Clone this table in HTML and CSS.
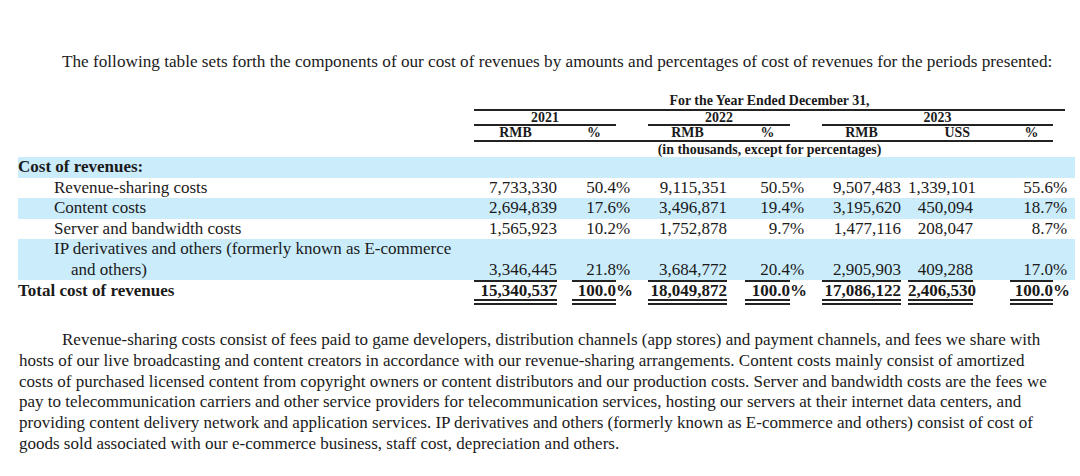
FILE: index.html
```html
<!DOCTYPE html>
<html lang="en">
<head>
<meta charset="utf-8">
<title>Cost of revenues</title>
<link rel="stylesheet" href="styles.css">
</head>
<body>
<div class="page">
  <p class="intro">The following table sets forth the components of our cost of revenues by amounts and percentages of cost of revenues for the periods presented:</p>

  <table class="fin">
    <colgroup>
      <col class="w-label"><col class="w-c1"><col class="w-g15"><col class="w-c2"><col class="w-p"><col class="w-g20">
      <col class="w-c3"><col class="w-g18"><col class="w-c4"><col class="w-p"><col class="w-g20">
      <col class="w-c5"><col class="w-g7"><col class="w-c6"><col class="w-g37"><col class="w-c7"><col class="w-p"><col class="w-trail">
    </colgroup>
    <thead>
      <tr class="h1">
        <th></th>
        <th colspan="16" class="rule">For the Year Ended December 31,</th>
        <th></th>
      </tr>
      <tr class="h2">
        <th></th>
        <th colspan="3" class="rule">2021</th>
        <th colspan="2"></th>
        <th colspan="3" class="rule">2022</th>
        <th colspan="2"></th>
        <th colspan="5" class="rule">2023</th>
        <th colspan="2"></th>
      </tr>
      <tr class="h3">
        <th></th>
        <th class="rule">RMB</th>
        <th class="rule"></th>
        <th class="rule">%</th>
        <th class="rule"></th>
        <th class="rule"></th>
        <th class="rule">RMB</th>
        <th class="rule"></th>
        <th class="rule">%</th>
        <th class="rule"></th>
        <th class="rule"></th>
        <th class="rule">RMB</th>
        <th class="rule"></th>
        <th class="rule usd">USS</th>
        <th class="rule"></th>
        <th class="rule">%</th>
        <th></th>
        <th></th>
      </tr>
      <tr class="h4">
        <th></th>
        <th colspan="16">(in thousands, except for percentages)</th>
        <th></th>
      </tr>
    </thead>
    <tbody>
      <tr class="band">
        <td class="lbl bold">Cost of revenues:</td>
        <td colspan="17"></td>
      </tr>
      <tr>
        <td class="lbl sub">Revenue-sharing costs</td>
        <td class="n">7,733,330</td><td></td><td class="n">50.4</td><td class="p">%</td><td></td>
        <td class="n">9,115,351</td><td></td><td class="n">50.5</td><td class="p">%</td><td></td>
        <td class="n">9,507,483</td><td></td><td class="n">1,339,101</td><td></td><td class="n">55.6</td><td class="p">%</td><td></td>
      </tr>
      <tr class="band">
        <td class="lbl sub">Content costs</td>
        <td class="n">2,694,839</td><td></td><td class="n">17.6</td><td class="p">%</td><td></td>
        <td class="n">3,496,871</td><td></td><td class="n">19.4</td><td class="p">%</td><td></td>
        <td class="n">3,195,620</td><td></td><td class="n">450,094</td><td></td><td class="n">18.7</td><td class="p">%</td><td></td>
      </tr>
      <tr>
        <td class="lbl sub">Server and bandwidth costs</td>
        <td class="n">1,565,923</td><td></td><td class="n">10.2</td><td class="p">%</td><td></td>
        <td class="n">1,752,878</td><td></td><td class="n">9.7</td><td class="p">%</td><td></td>
        <td class="n">1,477,116</td><td></td><td class="n">208,047</td><td></td><td class="n">8.7</td><td class="p">%</td><td></td>
      </tr>
      <tr class="band bottom">
        <td class="lbl sub">IP derivatives and others (formerly known as E-commerce<br>and others)</td>
        <td class="n">3,346,445</td><td></td><td class="n">21.8</td><td class="p">%</td><td></td>
        <td class="n">3,684,772</td><td></td><td class="n">20.4</td><td class="p">%</td><td></td>
        <td class="n">2,905,903</td><td></td><td class="n">409,288</td><td></td><td class="n">17.0</td><td class="p">%</td><td></td>
      </tr>
      <tr class="total">
        <td class="lbl bold">Total cost of revenues</td>
        <td class="n t">15,340,537</td><td></td><td class="n t">100.0</td><td class="p">%</td><td></td>
        <td class="n t">18,049,872</td><td></td><td class="n t">100.0</td><td class="p">%</td><td></td>
        <td class="n t">17,086,122</td><td></td><td class="n t">2,406,530</td><td></td><td class="n t">100.0</td><td class="p">%</td><td></td>
      </tr>
    </tbody>
  </table>

  <p class="para">Revenue-sharing costs consist of fees paid to game developers, distribution channels (app stores) and payment channels, and fees we share with<br>hosts of our live broadcasting and content creators in accordance with our revenue-sharing arrangements. Content costs mainly consist of amortized<br>costs of purchased licensed content from copyright owners or content distributors and our production costs. Server and bandwidth costs are the fees we<br>pay to telecommunication carriers and other service providers for telecommunication services, hosting our servers at their internet data centers, and<br>providing content delivery network and application services. IP derivatives and others (formerly known as E-commerce and others) consist of cost of<br>goods sold associated with our e-commerce business, staff cost, depreciation and others.</p>
</div>
</body>
</html>
```

FILE: styles.css
```css
html, body {
  margin: 0;
  padding: 0;
  background: #ffffff;
}

body {
  color: #1a1a1a;
  font-family: "Liberation Serif", "Times New Roman", serif;
  width: 1080px;
  height: 476px;
  overflow: hidden;
}

.page {
  padding-top: 52px;
}

.intro {
  margin: 0;
  padding-left: 62px;
  font-size: 17.2px;
  line-height: 20px;
  white-space: nowrap;
}

.fin {
  margin: 21px 0 0 18px;
  border-collapse: separate;
  border-spacing: 0;
  table-layout: fixed;
  width: 1057px;
}

.w-label { width: 456px; }
.w-c1 { width: 83px; }
.w-g15 { width: 15px; }
.w-c2 { width: 44px; }
.w-p { width: 12px; }
.w-g20 { width: 20px; }
.w-c3 { width: 79px; }
.w-g18 { width: 18px; }
.w-c4 { width: 45px; }
.w-c5 { width: 79px; }
.w-g7 { width: 7px; }
.w-c6 { width: 65px; }
.w-g37 { width: 37px; }
.w-c7 { width: 43px; }
.w-trail { width: 10px; }

.fin th {
  padding: 0;
  font-size: 13.9px;
  font-weight: bold;
  text-align: center;
  white-space: nowrap;
  vertical-align: bottom;
}

.fin th.rule {
  border-bottom: 2px solid #222;
}

.fin th.usd {
  text-align: right;
  padding-right: 3px;
}

.h1 th {
  line-height: 16px;
}

.h2 th {
  line-height: 13px;
}

.h3 th {
  line-height: 14px;
}

.h4 th {
  line-height: 15px;
  vertical-align: middle;
}

.fin td {
  padding: 0;
  font-size: 17px;
  line-height: 20.5px;
  white-space: nowrap;
  vertical-align: bottom;
}

.band td {
  background: #cbecfa;
}

.lbl {
  text-align: left;
  padding-left: 1px;
}

.lbl.sub {
  padding-left: 53px;
  text-indent: -17px;
  white-space: normal;
}

.bold {
  font-weight: bold;
}

.n {
  text-align: right;
}

.p {
  text-align: left;
}

.total td {
  font-weight: bold;
  line-height: 17px;
  vertical-align: middle;
  border-top: 2px solid transparent;
  border-bottom: 6px double transparent;
}

.total td.t {
  border-top-color: #222;
  border-bottom-color: #222;
}

.para {
  margin: 25px 0 0 0;
  padding-left: 19px;
  text-indent: 43px;
  font-size: 17px;
  line-height: 20.8px;
  white-space: nowrap;
}
```
